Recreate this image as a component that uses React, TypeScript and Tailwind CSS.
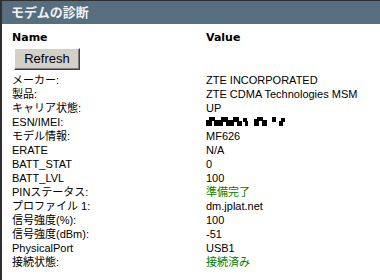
const rows: { name: string; value: string; tone?: "ok" | "redacted" }[] = [
  { name: "メーカー:", value: "ZTE INCORPORATED" },
  { name: "製品:", value: "ZTE CDMA Technologies MSM" },
  { name: "キャリア状態:", value: "UP" },
  { name: "ESN/IMEI:", value: "", tone: "redacted" },
  { name: "モデル情報:", value: "MF626" },
  { name: "ERATE", value: "N/A" },
  { name: "BATT_STAT", value: "0" },
  { name: "BATT_LVL", value: "100" },
  { name: "PINステータス:", value: "準備完了", tone: "ok" },
  { name: "プロファイル 1:", value: "dm.jplat.net" },
  { name: "信号強度(%):", value: "100" },
  { name: "信号強度(dBm):", value: "-51" },
  { name: "PhysicalPort", value: "USB1" },
  { name: "接続状態:", value: "接続済み", tone: "ok" },
];

function Redacted() {
  // blocky blacked-out IMEI
  return (
    <svg width="86" height="10" viewBox="0 0 86 10" className="mt-[2px]">
      <g fill="#000">
        <rect x="0" y="3" width="6" height="6" />
        <rect x="3" y="0" width="6" height="4" />
        <rect x="8" y="3" width="9" height="6" />
        <rect x="15" y="0" width="7" height="5" />
        <rect x="20" y="3" width="8" height="6" />
        <rect x="27" y="0" width="6" height="5" />
        <rect x="31" y="4" width="5" height="5" />
        <rect x="37" y="1" width="4" height="4" />
        <rect x="39" y="4" width="3" height="5" />
        <rect x="48" y="2" width="5" height="7" />
        <rect x="51" y="0" width="6" height="4" />
        <rect x="56" y="3" width="5" height="6" />
        <rect x="66" y="0" width="4" height="5" />
        <rect x="75" y="1" width="4" height="4" />
        <rect x="73" y="4" width="4" height="5" />
      </g>
    </svg>
  );
}

export default function App() {
  return (
    <div className="h-[280px] w-[380px] overflow-hidden bg-white font-['Liberation_Sans','Noto_Sans_CJK_JP',sans-serif] text-[11px] text-black">
      <div className="h-full border-l-2 border-t border-[#2f2f2f]">
        <div className="flex h-[23px] items-center bg-[#566e7e] px-[9px] font-['DejaVu_Sans','Noto_Sans_CJK_JP',sans-serif] text-[13px] font-bold text-[#eef2f4]">
          モデムの診断
        </div>
        <div className="px-[10px] pt-[7px]">
          <div className="grid grid-cols-[194px_1fr] font-['DejaVu_Sans',sans-serif] text-[11px] font-bold leading-[14px]">
            <span>Name</span>
            <span>Value</span>
          </div>
          <button className="ml-[2px] mt-[3px] h-[22px] w-[66px] border border-t-white border-l-white border-r-[#404040] border-b-[#404040] bg-[#d4d0c8] text-[13px] shadow-[inset_-1px_-1px_0_#808080]">
            Refresh
          </button>
          <div className="mt-[3px] grid grid-cols-[194px_1fr] whitespace-nowrap leading-[14px]">
            {rows.map((r) => (
              <div key={r.name} className="contents">
                <span>{r.name}</span>
                {r.tone === "redacted" ? (
                  <span className="h-[14px]">
                    <Redacted />
                  </span>
                ) : (
                  <span className={r.tone === "ok" ? "text-[#008000]" : ""}>{r.value}</span>
                )}
              </div>
            ))}
          </div>
        </div>
      </div>
    </div>
  );
}
